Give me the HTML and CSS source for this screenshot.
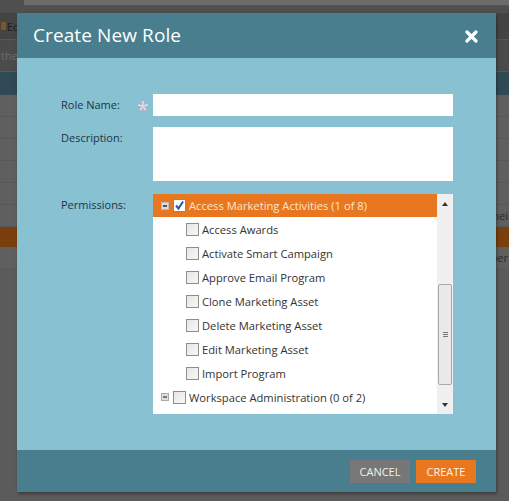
FILE: index.html
```html
<!DOCTYPE html>
<html>
<head>
<meta charset="utf-8">
<link rel="stylesheet" href="styles.css">
</head>
<body>
<div class="page">
  <div class="bg-top"><div class="bg-top-l"></div><div class="bg-top-r"></div></div>
  <div class="bg-row bg-dark"><span class="bg-icon"></span><span class="bg-text bg-ed">Ed</span></div>
  <div class="bg-row bg-mid"><span class="bg-text">the</span></div>
  <div class="bg-row bg-blue"></div>
  <div class="bg-row bg-gray"></div>
  <div class="bg-row bg-gray"></div>
  <div class="bg-row bg-gray"></div>
  <div class="bg-row bg-gray"></div>
  <div class="bg-row bg-gray"></div>
  <div class="bg-row bg-gray bg-right-text"><span class="bg-text">hei</span></div>
  <div class="bg-row bg-orange"></div>
  <div class="bg-row bg-gray bg-right-text"><span class="bg-text">per</span></div>
</div>

<div class="modal">
  <div class="modal-header">
    <span class="modal-title">Create New Role</span>
    <svg class="close" width="13" height="13" viewBox="0 0 13 13"><path d="M2 2 L11 11 M11 2 L2 11" stroke="#fff" stroke-width="3.2" stroke-linecap="round"/></svg>
  </div>
  <div class="modal-body">
    <div class="form-row">
      <div class="label">Role Name:</div>
      <span class="req">*</span>
      <div class="input"></div>
    </div>
    <div class="form-row">
      <div class="label">Description:</div>
      <div class="textarea"></div>
    </div>
    <div class="form-row">
      <div class="label">Permissions:</div>
      <div class="tree">
        <div class="tree-list">
          <div class="node node-top node-selected">
            <span class="toggle minus"></span>
            <span class="cb cb-checked"><svg width="11" height="11" viewBox="0 0 11 11"><path d="M2 5.5 L4.5 8.5 L9 1.5" fill="none" stroke="#2857a8" stroke-width="2"/></svg></span>
            <span class="node-text">Access Marketing Activities (1 of 8)</span>
          </div>
          <div class="node node-child"><span class="cb"></span><span class="node-text">Access Awards</span></div>
          <div class="node node-child"><span class="cb"></span><span class="node-text">Activate Smart Campaign</span></div>
          <div class="node node-child"><span class="cb"></span><span class="node-text">Approve Email Program</span></div>
          <div class="node node-child"><span class="cb"></span><span class="node-text">Clone Marketing Asset</span></div>
          <div class="node node-child"><span class="cb"></span><span class="node-text">Delete Marketing Asset</span></div>
          <div class="node node-child"><span class="cb"></span><span class="node-text">Edit Marketing Asset</span></div>
          <div class="node node-child"><span class="cb"></span><span class="node-text">Import Program</span></div>
          <div class="node node-top">
            <span class="toggle plus"></span>
            <span class="cb"></span>
            <span class="node-text">Workspace Administration (0 of 2)</span>
          </div>
        </div>
        <div class="scrollbar">
          <div class="arrow arrow-up"></div>
          <div class="track-space"></div>
          <div class="thumb"><span class="grip"></span></div>
          <div class="track-space2"></div>
          <div class="arrow arrow-down"></div>
        </div>
      </div>
    </div>
  </div>
  <div class="modal-footer">
    <button class="btn btn-cancel">CANCEL</button>
    <button class="btn btn-create">CREATE</button>
  </div>
</div>
</body>
</html>
```

FILE: styles.css
```css
* { box-sizing: border-box; }
html, body { margin: 0; padding: 0; }
body {
  width: 509px;
  height: 501px;
  overflow: hidden;
  background: #5b5b5b;
  font-family: "Open Sans", "Liberation Sans", sans-serif;
  position: relative;
}

/* dimmed page behind the overlay */
.page { display: flex; flex-direction: column; }
.bg-top { height: 13px; display: flex; background: #4f4f4f; }
.bg-top-l { width: 24px; }
.bg-top-r { flex: 1; height: 6px; background: #6b6b6b; border-bottom: 1px solid #555; }
.bg-row { height: 22px; display: flex; align-items: center; border-bottom: 1px solid #585858; }
.bg-dark { height: 27px; background: #444; }
.bg-mid { height: 32px; background: #4b4b4b; }
.bg-blue { height: 23px; background: #2f4a55; border-bottom: none; }
.bg-gray { background: #5f5f5f; }
.bg-orange { height: 20px; background: #7a3f0c; border-bottom: none; }
.bg-text { font-size: 11px; color: #3a3a3a; padding-left: 1px; }
.bg-icon { width: 5px; height: 8px; background: #7a5a20; border-radius: 1px; margin-left: 1px; }
.bg-ed { color: #1e1e1e; }
.bg-mid .bg-text { color: #6c6c6c; }
.bg-right-text { justify-content: flex-end; }
.bg-right-text .bg-text { color: #2a2a2a; padding-right: 1px; }

/* modal */
.modal {
  position: absolute;
  left: 17px;
  top: 13px;
  width: 479px;
  height: 479px;
  display: flex;
  flex-direction: column;
  box-shadow: 1px 2px 3px rgba(0,0,0,0.35);
}
.modal-header {
  height: 45px;
  background: #487e8e;
  display: flex;
  align-items: center;
  justify-content: space-between;
  padding: 0 18px 0 16px;
}
.modal-title { color: #fff; font-size: 19px; letter-spacing: 0.1px; margin-top: -2px; }
.close { display: block; margin-top: 1px; }

.modal-body {
  flex: 1;
  background: #88c1d2;
  padding: 36px 0 0 44px;
  display: flex;
  flex-direction: column;
  gap: 11px;
}
.form-row { display: flex; position: relative; }
.form-row + .form-row + .form-row { margin-top: 2px; }
.label {
  width: 92px;
  font-size: 11px;
  line-height: 20px;
  padding-top: 1px;
  color: #1c3443;
}
.req {
  position: absolute;
  left: 76px;
  top: 4px;
  color: #f3d6e0;
  font-size: 21px;
  line-height: 22px;
  text-shadow: 0 0 1px #c89aa8;
}
.input { width: 300px; height: 22px; background: #fff; }
.textarea { width: 300px; height: 54px; background: #fff; }

.tree {
  width: 300px;
  height: 220px;
  background: #fff;
  display: flex;
}
.tree-list { flex: 1; display: flex; flex-direction: column; }
.node {
  height: 24px;
  display: flex;
  align-items: center;
  font-size: 11.2px;
  color: #333;
}
.node-top { padding-left: 8px; }
.node-selected { height: 23px; background: #e8771f; color: #fde4cc; }
.node-child { padding-left: 33px; }
.node-text { margin-left: 3px; white-space: nowrap; }
.toggle {
  width: 8px;
  height: 8px;
  margin-right: 4px;
  position: relative;
  background: #c9c9c9;
  border: 1px solid #9d9d9d;
}
.toggle.minus { background: #ddd; border-color: #bbb; }
.toggle.minus::after {
  content: ""; position: absolute; left: 1px; top: 2px; width: 4px; height: 2px; background: #555;
}
.toggle.plus { background: #ddd; border-color: #aaa; }
.toggle.plus::after {
  content: ""; position: absolute; left: 1px; top: 2px; width: 4px; height: 2px; background: #777;
}
.cb {
  width: 13px;
  height: 13px;
  border: 1px solid #8e8e8e;
  background: linear-gradient(135deg, #e6e6e6, #f8f8f8);
  display: flex;
  align-items: center;
  justify-content: center;
}
.cb-checked { background: #fff; border-color: #7d8a9a; }
.cb svg { display: block; }

.scrollbar {
  width: 16px;
  background: #f0f0f0;
  display: flex;
  flex-direction: column;
  align-items: center;
}
.arrow { width: 0; height: 0; border-left: 3px solid transparent; border-right: 3px solid transparent; }
.arrow-up { margin-top: 8px; border-bottom: 4px solid #333; }
.arrow-down { margin-bottom: 7px; border-top: 4px solid #333; }
.track-space { height: 78px; }
.thumb {
  width: 14px;
  height: 101px;
  background: #e9e9e9;
  border: 1px solid #a8a8a8;
  border-radius: 2px;
  display: flex;
  align-items: center;
  justify-content: center;
}
.grip {
  width: 5px;
  height: 5px;
  border-top: 1px solid #777;
  border-bottom: 1px solid #777;
  position: relative;
}
.grip::after {
  content: ""; position: absolute; left: 0; top: 1px; width: 5px; height: 1px; background: #777;
}
.track-space2 { flex: 1; }

.modal-footer {
  height: 42px;
  background: #487e8e;
  display: flex;
  justify-content: flex-end;
  align-items: flex-start;
  padding: 10px 20px 0 0;
  gap: 6px;
}
.btn {
  height: 23px;
  border: none;
  font-family: "Open Sans", "Liberation Sans", sans-serif;
  font-size: 11px;
  color: #fff;
  padding: 0;
  cursor: pointer;
}
.btn-cancel { width: 60px; background: #777; color: #f0f0f0; }
.btn-create { width: 60px; background: #e8771f; color: #fff3e6; }
```
